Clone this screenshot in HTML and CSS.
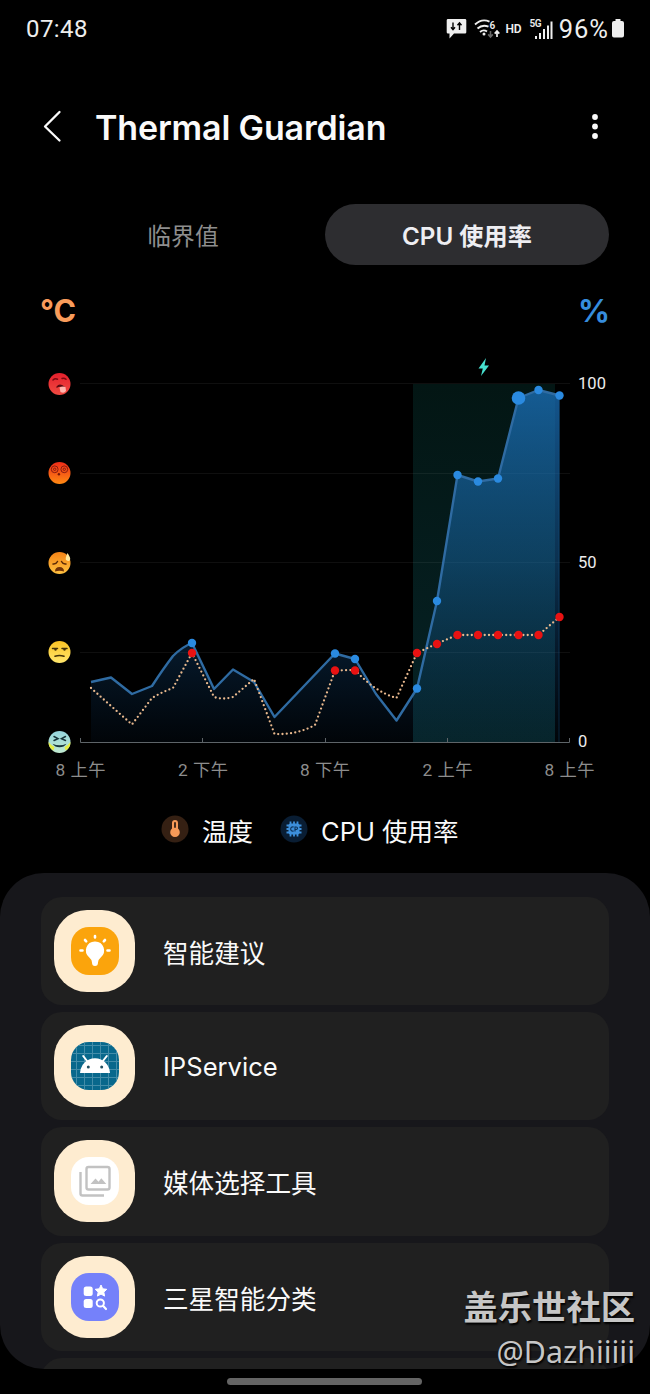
FILE: index.html
```
<!DOCTYPE html>
<html lang="zh-CN">
    <head>
        <meta charset="utf-8">
        <title>Thermal Guardian</title>
        <link rel="stylesheet" href="styles.css">
    </head>
    <body>
        <div id="status">
            <span class="clock">07:48</span>
            <div class="status-icons">
                <svg class="status-svg" width="108" height="30" viewBox="444 14 108 30">
                    <path d="M446 19h17q1.300 0 1.300 1.300v12q0 1.300-1.300 1.300h-11l-4.500 5v-5h-1.500q-1.300 0-1.300-1.300v-12q0-1.300 1.300-1.300z" fill="#eee"/>
                    <path d="M451 22.500v7m-2-2.200l2 2.400 2-2.400M457.500 30v-7m-2 2.200l2-2.400 2 2.400" fill="none" stroke="#000" stroke-width="1.400"/>
                    <g fill="none" stroke="#eee" stroke-width="1.900">
                        <path d="M473 24.500q7-6.500 14.500-2.800"/>
                        <path d="M475.500 28.500q5-4.500 11-1.800"/>
                        <path d="M478 32q3.500-3 7-.5"/>
                        <path d="M495 37v-6m-2.300 2.600l2.300-2.600 2.300 2.600" stroke-width="1.700"/>
                        <path d="M488.500 31v6m-2.300-2.600l2.300 2.600 2.300-2.600" stroke="#666" stroke-width="1.600"/>
                    </g>
                    <circle cx="482" cy="34" r="1.500" fill="#eee"/>
                    <text x="487.500" y="28.500" class="tiny">6</text>
                    <text x="503.500" y="33" class="hd" textLength="16">HD</text>
                    <text x="527.500" y="27" class="tiny" textLength="12">5G</text>
                    <path d="M533 36h2v3h-2zM537 33h2v6h-2zM541 29h2v10h-2zM545 25.500h2v13.500h-2zM548.500 21.500h2v17.500h-2z" fill="#eee"/>
                </svg>
                <span class="battery-text">96%</span>
                <svg class="battery" width="14" height="20" viewBox="0 0 14 20">
                    <path d="M4.500 0h5v2h1.500q2 0 2 2v12.500q0 2-2 2h-8q-2 0-2-2v-12.500q0-2 2-2h1.500z" fill="#eee"/>
                </svg>
            </div>
        </div>

        <div id="header">
            <svg class="back" width="20" height="34" viewBox="0 0 20 34">
                <path d="M17.500 2L3 16.500l14.500 14" fill="none" stroke="#fafafa" stroke-width="2.300" stroke-linecap="round" stroke-linejoin="round"/>
            </svg>
            <h1>Thermal Guardian</h1>
            <svg class="more" width="8" height="28" viewBox="0 0 8 28">
                <g fill="#fafafa"><circle cx="4" cy="4" r="2.900"/><circle cx="4" cy="13.500" r="2.900"/><circle cx="4" cy="23" r="2.900"/></g>
            </svg>
        </div>

        <div id="tabs">
            <div class="tab">临界值</div>
            <div class="tab selected">CPU 使用率</div>
        </div>

        <svg id="chart" width="650" height="525" viewBox="0 265 650 525">
            <defs>
                <linearGradient id="area" gradientUnits="userSpaceOnUse" x1="0" y1="384" x2="0" y2="742">
                    <stop offset="0" stop-color="#1b74c0" stop-opacity=".75"/>
                    <stop offset=".5" stop-color="#1869ac" stop-opacity=".46"/>
                    <stop offset="1" stop-color="#125090" stop-opacity=".06"/>
                </linearGradient>
                <linearGradient id="charge" x1="0" y1="0" x2="0" y2="1">
                    <stop offset="0" stop-color="#031614"/>
                    <stop offset="1" stop-color="#062225"/>
                </linearGradient>
                <linearGradient id="hot" x1="0" y1="0" x2="0" y2="1"><stop stop-color="#e5202c"/><stop offset="1" stop-color="#f04a41"/></linearGradient>
                <linearGradient id="dizzy" x1="0" y1="0" x2="0" y2="1"><stop stop-color="#ee2c18"/><stop offset="1" stop-color="#ff8a12"/></linearGradient>
                <linearGradient id="sweat" x1="0" y1="0" x2="0" y2="1"><stop stop-color="#f58316"/><stop offset="1" stop-color="#ffc240"/></linearGradient>
                <linearGradient id="meh" x1="0" y1="0" x2="0" y2="1"><stop stop-color="#fbc324"/><stop offset="1" stop-color="#ffe66c"/></linearGradient>
                <linearGradient id="cool" x1="0" y1="0" x2="0" y2="1"><stop stop-color="#94d4dc"/><stop offset="1" stop-color="#c0ead0"/></linearGradient>
            </defs>

            <text x="40" y="321.500" class="unit celsius" textLength="36" lengthAdjust="spacingAndGlyphs">°C</text>
            <text x="578" y="321.500" class="unit percent" textLength="32" lengthAdjust="spacingAndGlyphs">%</text>

            <!-- charging period -->
            <rect x="413" y="384" width="142" height="358" fill="url(#charge)"/>
            <path d="M486 358l-7.500 10.500h4.300l-1.800 7.500 8-10.500h-4.500z" fill="#46e0cf"/>

            <path d="M80 383.500h490M80 473.500h490M80 562.500h490M80 652.500h490" class="grid"/>

            <!-- cpu -->
            <path d="M91 742V682L111 677.500L132 694L152 686Q163 669 173 656Q182 647 192 643L214 689L233 669.500L254 682L274.500 717L335 653.500L355 659L376 694L396.500 720.500L417 688.500L437 601L457.500 475L478 481.500L498 478.500L518.500 398L538.500 390L559.500 395.500V742z" fill="url(#area)"/>
            <path d="M91 682L111 677.500L132 694L152 686Q163 669 173 656Q182 647 192 643L214 689L233 669.500L254 682L274.500 717L335 653.500L355 659L376 694L396.500 720.500L417 688.500L437 601L457.500 475L478 481.500L498 478.500L518.500 398L538.500 390L559.500 395.500" class="cpu-line"/>
            <path d="M559 396V742" stroke="#15568a" stroke-width="1" opacity=".4"/>
            <path d="M80.500 738V742.500H569.500V738M202.500 738v4M325.500 738v4M447.500 738v4" class="axis"/>

            <!-- temperature -->
            <path d="M91 688L111 706L132 724.500L152 698Q162 692 173 688L192 653L214 697Q223 700 233 697L254 679L274.500 734Q297 735 315 725L335 670.500L355 670Q375 692 396.500 698L417 653L437 643.500L457.500 635H538.500L559.500 617" class="temp-line"/>

            <g fill="#2a8ae0">
                <circle cx="192" cy="643" r="4.200"/><circle cx="335" cy="653.500" r="4.200"/><circle cx="355" cy="659" r="4.200"/>
                <circle cx="417" cy="688.500" r="4.200"/><circle cx="437" cy="601" r="4.200"/><circle cx="457.500" cy="475" r="4.200"/>
                <circle cx="478" cy="481.500" r="4.200"/><circle cx="498" cy="478.500" r="4.200"/><circle cx="518.500" cy="398" r="6.800"/>
                <circle cx="538.500" cy="390" r="4.200"/><circle cx="559.500" cy="395.500" r="4.200"/>
            </g>
            <g fill="#e81212">
                <circle cx="192" cy="653" r="4.200"/><circle cx="335" cy="670.500" r="4.200"/><circle cx="355" cy="670.500" r="4.200"/>
                <circle cx="417" cy="653" r="4.200"/><circle cx="437" cy="644" r="4.200"/><circle cx="457.500" cy="635" r="4.200"/>
                <circle cx="478" cy="635" r="4.200"/><circle cx="498" cy="635" r="4.200"/><circle cx="518.500" cy="635" r="4.200"/>
                <circle cx="538.500" cy="635" r="4.200"/><circle cx="559.500" cy="617" r="4.200"/>
            </g>

            <!-- faces -->
            <g transform="translate(59.500 384)">
                <circle r="11" fill="url(#hot)"/>
                <path d="M-6.500-4q2-2 4.500-.8M2.500-5.500q2-1 4 .8" class="face" stroke="#7c0810"/>
                <path d="M-3 2.500q3-4 8 0v1.500q-4-2.500-8 0z" fill="#5c0a10"/>
                <path d="M0 3.500q3-1.500 6-.5l.5 4q-2 3-5.500 1z" fill="#ffb6ae"/>
            </g>
            <g transform="translate(59.500 473)">
                <circle r="11" fill="url(#dizzy)"/>
                <g fill="none" stroke="#8a1c10" stroke-width="1"><circle cx="-4.800" cy="-3.700" r="3.400"/><circle cx="-4.800" cy="-3.700" r="1.200"/><circle cx="4.800" cy="-3.700" r="3.400"/><circle cx="4.800" cy="-3.700" r="1.200"/></g>
                <circle cx="-.6" cy="1.200" r="1.200" fill="#791705"/>
            </g>
            <g transform="translate(59.500 563)">
                <circle r="11" fill="url(#sweat)"/>
                <path d="M-6.500 1q3 .5 4.500-2.500M2-1.500q1.500 3 4.500 2.500" class="face" stroke="#5c2a06"/>
                <path d="M-4.500 8.500q0-4.500 4.500-4.500t4.500 4.500q-4.500-1.500-9 0z" fill="#713206"/>
                <path d="M8-10q3.500 5 2.500 7t-4 0q-1-2 1.500-7z" fill="#ffe9a0"/>
            </g>
            <g transform="translate(59.500 652)">
                <circle r="11" fill="url(#meh)"/>
                <path d="M-7-3.500h5M2.500-3.500h5M-4.500 4.200q4.500-1.500 9 0" class="face" stroke="#463308"/>
                <circle cx="-4" cy="-2.500" r="1.200" fill="#463308"/><circle cx="5" cy="-2.500" r="1.200" fill="#463308"/>
            </g>
            <g transform="translate(59.500 742)">
                <circle r="11" fill="url(#cool)"/>
                <path d="M-11 0q3 4 6 5l-1 3.500Q-11 6-11 0zM11 0q-3 4-6 5l1 3.500Q11 6 11 0z" fill="#e4ed42"/>
                <path d="M-5.500-5.500l4 2.200-4 1.800M6-5.500l-4 2.200 4 1.800" class="face" stroke="#17343a"/>
                <path d="M-7 1.800q7 3 14 0-2.500 3.500-7 3.500t-7-3.500z" fill="#17343a"/>
            </g>

            <g class="y-label">
                <text x="578" y="389" textLength="28">100</text>
                <text x="578" y="568" textLength="18.500">50</text>
                <text x="578" y="747">0</text>
            </g>
            <g class="x-label" text-anchor="middle">
                <text x="80.500" y="776" textLength="50">8 上午</text>
                <text x="203" y="776" textLength="50">2 下午</text>
                <text x="325" y="776" textLength="50">8 下午</text>
                <text x="447.500" y="776" textLength="50">2 上午</text>
                <text x="569.500" y="776" textLength="50">8 上午</text>
            </g>
        </svg>

        <div id="legend">
            <svg width="28" height="28" viewBox="-14 -14 28 28">
                <circle r="13.500" fill="#352013"/>
                <path d="M-3-6a3 3 0 0 1 6 0v5.500a4.800 4.800 0 1 1-6 0z" fill="#f79a58"/>
                <path d="M0-6v4" stroke="#352013" stroke-width="1.800" stroke-linecap="round"/>
            </svg>
            <span class="legend-temp">温度</span>
            <svg width="28" height="28" viewBox="-14 -14 28 28">
                <circle r="13.500" fill="#091d33"/>
                <path d="M-3.500-7.500v15M0-7.500v15M3.500-7.500v15M-7.500-3.500h15M-7.500 0h15M-7.500 3.500h15" stroke="#3d8fdb" stroke-width="1.800"/>
                <rect x="-5.500" y="-5.500" width="11" height="11" rx="2" fill="#3d8fdb"/>
                <path d="M-.3-2q-3-.6-3 2t3 2M1 2.500v-4.500h1.200q1.300 0 1.300 1.200T2.200 .5H1" fill="none" stroke="#0c3157" stroke-width="1.100"/>
            </svg>
            <span class="legend-cpu">CPU 使用率</span>
        </div>

        <div id="panel">
            <div class="card">
                <div class="app-icon">
                    <svg width="48" height="48" viewBox="0 0 48 48">
                        <rect width="48" height="48" rx="18" fill="#fba40c"/>
                        <path d="M24 14.500a9 9 0 0 1 5.500 16.200q-2.500 2-2.500 4.800 0 3.500-3 3.500t-3-3.500q0-2.800-2.500-4.800A9 9 0 0 1 24 14.500z" fill="#fff"/>
                        <path d="M24 9v1.500M14 13l1.200 1.300M34 13l-1.200 1.300M9.500 23.500h2M36.500 23.500h2" stroke="#fff" stroke-width="2.600" stroke-linecap="round"/>
                    </svg>
                </div>
                <span class="name">智能建议</span>
            </div>
            <div class="card">
                <div class="app-icon">
                    <svg width="48" height="48" viewBox="0 0 48 48">
                        <defs><clipPath id="squircle"><rect width="48" height="48" rx="18"/></clipPath></defs>
                        <g clip-path="url(#squircle)">
                            <rect width="48" height="48" fill="#08688c"/>
                            <path d="M5.500 0v48M13.500 0v48M21.500 0v48M29.500 0v48M37.500 0v48M45.500 0v48M0 3.500h48M0 11.500h48M0 19.500h48M0 27.500h48M0 35.500h48M0 43.500h48" stroke="#438da9" stroke-width="1"/>
                        </g>
                        <path d="M9 31q.8-9.500 9-13.500 6-2.600 12 0 8.200 4 9 13.500z" fill="#fff"/>
                        <path d="M16.500 19.500l-4.300-5.500M31.500 19.500l4.300-5.500" stroke="#fff" stroke-width="2" stroke-linecap="round"/>
                        <circle cx="17.300" cy="25" r="1.500" fill="#234f60"/><circle cx="30.700" cy="25" r="1.500" fill="#234f60"/>
                    </svg>
                </div>
                <span class="name latin">IPService</span>
            </div>
            <div class="card">
                <div class="app-icon">
                    <svg width="48" height="48" viewBox="0 0 48 48">
                        <rect width="48" height="48" rx="18" fill="#fff"/>
                        <g fill="none" stroke="#c2c2c2" stroke-width="2.400">
                            <rect x="15.500" y="10" width="23" height="22.500" rx="2"/>
                            <path d="M9.500 15v21.500q0 2 2 2h21.500"/>
                        </g>
                        <path d="M19.500 27l5-5.500 3 3.200 2.800-3.500 5 5.800z" fill="#c2c2c2"/>
                    </svg>
                </div>
                <span class="name">媒体选择工具</span>
            </div>
            <div class="card">
                <div class="app-icon">
                    <svg width="48" height="48" viewBox="0 0 48 48">
                        <rect width="48" height="48" rx="18" fill="#7581fa"/>
                        <rect x="12.700" y="13.500" width="9" height="9.500" rx="2.500" fill="#fff"/>
                        <rect x="12.700" y="26" width="9" height="9" rx="2.500" fill="#fff"/>
                        <path d="M30 12l1.700 3.800 4.100.5-3 2.800.8 4-3.600-2-3.600 2 .8-4-3-2.800 4.100-.5z" fill="#fff" stroke="#fff" stroke-linejoin="round"/>
                        <circle cx="29.300" cy="30" r="3.600" fill="none" stroke="#fff" stroke-width="2"/>
                        <path d="M32 32.800l3 3.200" stroke="#fff" stroke-width="2.200" stroke-linecap="round"/>
                    </svg>
                </div>
                <span class="name">三星智能分类</span>
            </div>
            <div class="card"></div>
        </div>

        <div id="nav-handle"></div>

        <div id="watermark">
            <div class="community">盖乐世社区</div>
            <div class="user">@Dazhiiiii</div>
        </div>
    </body>
</html>
```

FILE: styles.css
```
body{
    position: relative;
    display: flex;
    flex-direction: column;
    margin: 0;
    width: 650px;
    height: 1394px;
    overflow: hidden;
    background-color: #000;
    color: #fafafa;
    font-family: Inter, "Noto Sans CJK SC", sans-serif;
}

svg{
    display: block;
    flex: none;
}

#status{
    display: flex;
    justify-content: space-between;
    align-items: center;
    box-sizing: border-box;
    height: 58px;
    padding: 0 25px 0 26px;
    color: #eee;
}

.clock{
    font-family: Roboto, sans-serif;
    font-size: 24px;
    letter-spacing: 0.4px;
}

.status-icons{
    display: flex;
    align-items: center;
}

.battery-text{
    margin-left: 5px;
    font-family: Roboto, sans-serif;
    font-size: 25.5px;
    letter-spacing: 1px;
}

.battery{
    margin-left: 2px;
}

.tiny{
    font: 600 10px Roboto, sans-serif;
    fill: #eee;
}

.hd{
    font: 600 12px Roboto, sans-serif;
    fill: #eee;
}

#header{
    display: flex;
    align-items: center;
    height: 138px;
    padding: 0 51px 0 42px;
}

h1{
    flex: 1;
    margin: 0 0 0 33px;
    font-size: 34px;
    font-weight: 600;
    letter-spacing: -0.15px;
    white-space: nowrap;
}

#tabs{
    display: flex;
    margin-top: 8px;
    padding: 0 41px;
}

.tab{
    flex: 1;
    height: 61px;
    border-radius: 31px;
    font-size: 23.8px;
    line-height: 65px;
    text-align: center;
    color: #8e8e8e;
}

.tab.selected{
    background-color: #2d2d30;
    font-size: 24.2px;
    font-weight: 600;
    color: #eeeef2;
}

.unit{
    font: 700 31px Inter, sans-serif;
}

.celsius{
    fill: #f99c5b;
}

.percent{
    fill: #368ddd;
}

.grid{
    fill: none;
    stroke: #fff;
    stroke-opacity: 0.06;
}

.axis{
    fill: none;
    stroke: #5e6468;
}

.cpu-line{
    fill: none;
    stroke: #2f6ba2;
    stroke-width: 2.4;
    stroke-linejoin: round;
}

.temp-line{
    fill: none;
    stroke: #e9b98e;
    stroke-width: 2.3;
    stroke-linecap: round;
    stroke-dasharray: 0 4.3;
}

.face{
    fill: none;
    stroke-width: 1.5;
    stroke-linecap: round;
}

.y-label{
    font: 16.5px Roboto, sans-serif;
    fill: #ededed;
}

.x-label{
    font: 17.3px Roboto, "Noto Sans CJK SC", sans-serif;
    fill: #8d8d8d;
}

#legend{
    display: flex;
    align-items: center;
    height: 78px;
    padding-left: 161px;
    font-size: 25.5px;
}

.legend-temp{
    margin: 0 27px 0 13px;
}

.legend-cpu{
    margin: 0 0 0 13px;
}

#panel{
    display: flex;
    flex-direction: column;
    gap: 7px;
    box-sizing: border-box;
    height: 496px;
    margin-top: 5px;
    padding: 24px 41px 0;
    overflow: hidden;
    border-radius: 44px;
    background-color: #17171b;
}

.card{
    display: flex;
    flex: none;
    align-items: center;
    box-sizing: border-box;
    height: 108.2px;
    padding-left: 13px;
    border-radius: 21px;
    background-color: #202020;
}

.app-icon{
    display: flex;
    align-items: center;
    justify-content: center;
    width: 81px;
    height: 82px;
    border-radius: 33px;
    background-color: #feecd0;
}

.name{
    margin: 1px 0 0 28px;
    font-size: 25.6px;
}

.name.latin{
    margin-top: 0;
}

#nav-handle{
    width: 195px;
    height: 7px;
    margin: 9px 0 0 227px;
    border-radius: 4px;
    background-color: #646464;
}

#watermark{
    position: absolute;
    right: 15px;
    bottom: 22px;
    text-align: right;
    color: #c6c6c6;
    text-shadow: 1px 2px 2px #000;
    white-space: nowrap;
}

.community{
    font-size: 34.3px;
    font-weight: 700;
    line-height: 48px;
}

.user{
    font-family: "Noto Sans", sans-serif;
    font-size: 30.3px;
    line-height: 40px;
}
```
